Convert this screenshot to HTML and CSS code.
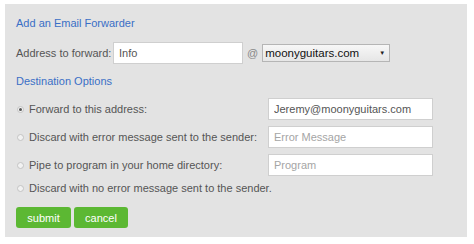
FILE: index.html
```html
<!DOCTYPE html>
<html>
<head>
<meta charset="utf-8">
<link rel="stylesheet" href="styles.css">
</head>
<body>
<div class="panel">
  <div class="heading">Add an Email Forwarder</div>
  <div class="addr-row">
    <span class="label">Address to forward:</span>
    <input class="text addr" type="text" value="Info">
    <span class="at">@</span>
    <div class="select"><span>moonyguitars.com</span><span class="arrow">&#9660;</span></div>
  </div>
  <div class="heading sub">Destination Options</div>
  <div class="options">
    <div class="opt">
      <label class="opt-label"><span class="radio checked"></span>Forward to this address:</label>
      <input class="text dest" type="text" value="Jeremy@moonyguitars.com">
    </div>
    <div class="opt">
      <label class="opt-label"><span class="radio"></span>Discard with error message sent to the sender:</label>
      <input class="text dest" type="text" placeholder="Error Message">
    </div>
    <div class="opt">
      <label class="opt-label"><span class="radio"></span>Pipe to program in your home directory:</label>
      <input class="text dest" type="text" placeholder="Program">
    </div>
    <div class="opt short">
      <label class="opt-label"><span class="radio"></span>Discard with no error message sent to the sender.</label>
    </div>
  </div>
  <div class="buttons">
    <button class="btn">submit</button>
    <button class="btn">cancel</button>
  </div>
</div>
</body>
</html>
```
FILE: styles.css
```css
html, body {
  margin: 0;
  padding: 0;
  background: #fff;
}
body {
  font-family: "Liberation Sans", Arial, sans-serif;
  font-size: 11px;
  color: #555;
}
.panel {
  box-sizing: border-box;
  margin: 4px 0 0 5px;
  width: 462px;
  height: 233px;
  background: #e3e3e3;
  padding: 12px 0 0 11px;
}
.heading {
  color: #3a6fc6;
  font-size: 11px;
  height: 14px;
  line-height: 14px;
}
.sub {
  margin-top: 10px;
}
.addr-row {
  margin-top: 12px;
  display: flex;
  align-items: center;
  height: 22px;
}
.label {
  width: 97px;
  white-space: nowrap;
}
.text {
  box-sizing: border-box;
  height: 22px;
  border: 1px solid #cfcfcf;
  background: #fff;
  font-family: "Liberation Sans", Arial, sans-serif;
  font-size: 11px;
  color: #555;
  padding: 0 5px;
  margin: 0;
  outline: none;
}
.text::placeholder {
  color: #a5a5a5;
}
.addr {
  width: 130px;
}
.at {
  color: #888;
  margin: 0 4px 0 4px;
}
.select {
  box-sizing: border-box;
  width: 128px;
  height: 18px;
  border: 1px solid #b5b5b5;
  background: linear-gradient(#f7f7f7, #e6e6e6);
  display: flex;
  align-items: center;
  justify-content: space-between;
  padding: 0 4px 0 2px;
  color: #111;
  font-size: 11.5px;
}
.arrow {
  font-size: 6px;
  color: #222;
}
.options {
  margin-top: 10px;
  display: flex;
  flex-direction: column;
  gap: 6px;
}
.opt {
  display: flex;
  align-items: center;
  height: 22px;
}
.opt.short {
  height: 12px;
}
.opt-label {
  width: 252px;
  display: flex;
  align-items: center;
  white-space: nowrap;
}
.opt.short .opt-label {
  width: auto;
}
.radio {
  box-sizing: border-box;
  flex: none;
  width: 7px;
  height: 7px;
  border-radius: 50%;
  border: 1px solid #c4c4c4;
  background: #f2f2f2;
  margin: 0 5px 0 1px;
  display: inline-flex;
  align-items: center;
  justify-content: center;
}
.radio.checked::after {
  content: "";
  width: 3px;
  height: 3px;
  border-radius: 50%;
  background: #555;
}
.dest {
  width: 165px;
}
.buttons {
  margin-top: 13px;
  display: flex;
  gap: 3px;
}
.btn {
  height: 21px;
  border: none;
  border-radius: 3px;
  background: #5cb833;
  color: #fff;
  font-family: "Liberation Sans", Arial, sans-serif;
  font-size: 11px;
  padding: 0;
  width: 55px;
}
.btn + .btn {
  width: 54px;
}
```
